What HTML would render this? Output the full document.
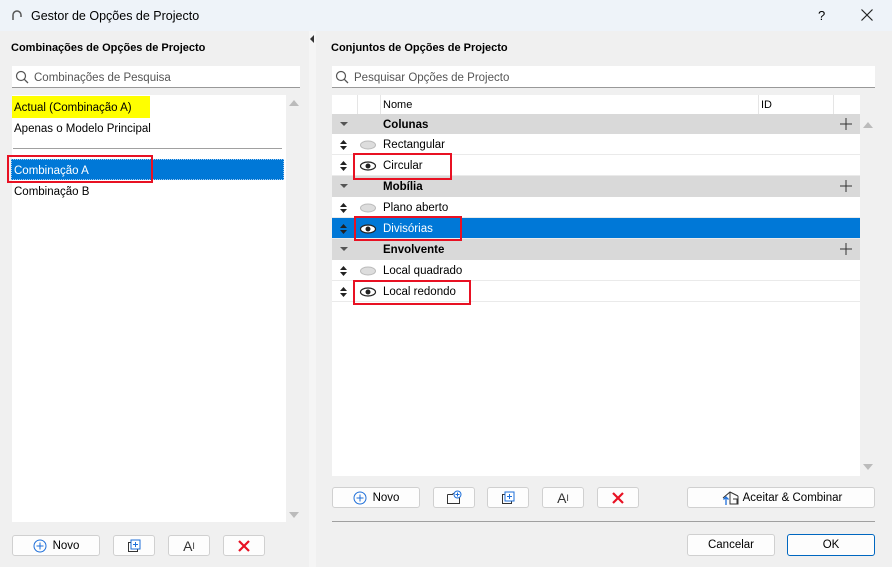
<!DOCTYPE html>
<html><head><meta charset="utf-8"><style>
*{box-sizing:border-box;margin:0;padding:0}
body{width:892px;height:567px;background:#f0f0f0;font-family:"Liberation Sans",sans-serif;font-size:11.5px;color:#000;position:relative;overflow:hidden}
.a{position:absolute}
.title{left:0;top:0;width:892px;height:31px;background:#eef3f9}
.btn{position:absolute;background:#fdfdfd;border:1px solid #d0d0d0;border-radius:3px;display:flex;align-items:center;justify-content:center;font-size:11.5px}
.row{position:absolute;left:332px;width:528px;height:21px;border-bottom:1px solid #eaeaea;background:#fff}
.grp{background:#d9d9d9;font-weight:bold;border-bottom:none}
.txt{position:absolute;left:51px;top:5px}
.arr{position:absolute;left:8px;top:6px}
.red{position:absolute;border:2px solid #e81123}
.tri{position:absolute;left:8px;top:8px;width:0;height:0;border-left:4px solid transparent;border-right:4px solid transparent;border-top:4px solid #555}
.plus{position:absolute;right:8px;top:4px}
.eye{position:absolute;left:27px;top:6px}
</style></head><body>
<div class="a title"></div>
<svg class="a" style="left:11px;top:9px" width="12" height="12"><path d="M2 11 V6 A4 4 0 0 1 10 6 V8" fill="none" stroke="#555" stroke-width="1.5"/></svg>
<div class="a" style="left:31px;top:9px;font-size:12.5px">Gestor de Opções de Projecto</div>
<div class="a" style="left:818px;top:8px;font-size:13px">?</div>
<svg class="a" style="left:861px;top:9px" width="12" height="12"><path d="M0.5 0.5L11.5 11.5M11.5 0.5L0.5 11.5" stroke="#222" stroke-width="1.2"/></svg>

<div class="a" style="left:309px;top:31px;width:7px;height:536px;background:#f5f5f5"></div>
<div class="a" style="left:310px;top:35px;width:0;height:0;border-top:4px solid transparent;border-bottom:4px solid transparent;border-right:4px solid #333"></div>

<div class="a" style="left:11px;top:42px;font-weight:bold;font-size:11px">Combinações de Opções de Projecto</div>
<div class="a" style="left:12px;top:66px;width:288px;height:22px;background:#fff;border-bottom:1px solid #999"></div>
<svg class="a" style="left:15px;top:70px" width="14" height="14"><circle cx="6" cy="6" r="4.5" fill="none" stroke="#555" stroke-width="1.2"/><path d="M9.3 9.3 L13 13" stroke="#555" stroke-width="1.3"/></svg>
<div class="a" style="left:34px;top:72px;color:#555">Combinações de Pesquisa</div>
<div class="a" style="left:12px;top:95px;width:274px;height:427px;background:#fff"></div>
<div class="a" style="left:289px;top:100px;border-left:5px solid transparent;border-right:5px solid transparent;border-bottom:6px solid #bbb"></div>
<div class="a" style="left:289px;top:512px;border-left:5px solid transparent;border-right:5px solid transparent;border-top:6px solid #bbb"></div>
<div class="a" style="left:12px;top:96px;width:138px;height:22px;background:#ffff00"></div>
<div class="a" style="left:14px;top:102px">Actual (Combinação A)</div>
<div class="a" style="left:14px;top:123px">Apenas o Modelo Principal</div>
<div class="a" style="left:13px;top:148px;width:269px;height:1px;background:#a0a0a0"></div>
<div class="a" style="left:11px;top:159px;width:273px;height:21px;background:#0078d7;border:1px dotted #9cc8f0"></div>
<div class="a" style="left:14px;top:165px;color:#fff">Combinação A</div>
<div class="red" style="left:7px;top:155px;width:146px;height:28px"></div>
<div class="a" style="left:14px;top:186px">Combinação B</div>

<div class="btn" style="left:12px;top:535px;width:88px;height:21px"><svg width="14" height="14" style="margin-right:6px"><circle cx="7" cy="7" r="6" fill="none" stroke="#1e6fd9"/><path d="M7 3.5v7M3.5 7h7" stroke="#1e6fd9"/></svg>Novo</div>
<div class="btn" style="left:113px;top:535px;width:42px;height:21px"><svg width="14" height="14"><rect x="1.5" y="3.5" width="9" height="9" fill="none" stroke="#333"/><rect x="4" y="1" width="9" height="9" fill="#fff" stroke="#1e6fd9"/><path d="M8.5 3v5M6 5.5h5" stroke="#1e6fd9"/></svg></div>
<div class="btn" style="left:168px;top:535px;width:42px;height:21px;font-size:14px;color:#333">A<sup style="font-size:9px">I</sup></div>
<div class="btn" style="left:223px;top:535px;width:42px;height:21px"><svg width="14" height="14"><path d="M2 2L12 12M12 2L2 12" stroke="#e81123" stroke-width="2.2"/></svg></div>

<div class="a" style="left:331px;top:42px;font-weight:bold;font-size:11px">Conjuntos de Opções de Projecto</div>
<div class="a" style="left:332px;top:66px;width:543px;height:22px;background:#fff;border-bottom:1px solid #999"></div>
<svg class="a" style="left:335px;top:70px" width="14" height="14"><circle cx="6" cy="6" r="4.5" fill="none" stroke="#555" stroke-width="1.2"/><path d="M9.3 9.3 L13 13" stroke="#555" stroke-width="1.3"/></svg>
<div class="a" style="left:354px;top:72px;color:#555">Pesquisar Opções de Projecto</div>
<div class="a" style="left:332px;top:95px;width:528px;height:381px;background:#fff"></div>
<div class="a" style="left:863px;top:122px;border-left:5px solid transparent;border-right:5px solid transparent;border-bottom:6px solid #bbb"></div>
<div class="a" style="left:863px;top:464px;border-left:5px solid transparent;border-right:5px solid transparent;border-top:6px solid #bbb"></div>
<div class="a" style="left:357px;top:95px;width:1px;height:19px;background:#e5e5e5"></div>
<div class="a" style="left:380px;top:95px;width:1px;height:19px;background:#e5e5e5"></div>
<div class="a" style="left:758px;top:95px;width:1px;height:19px;background:#e5e5e5"></div>
<div class="a" style="left:833px;top:95px;width:1px;height:19px;background:#e5e5e5"></div>
<div class="a" style="left:383px;top:99px;font-size:11px">Nome</div>
<div class="a" style="left:761px;top:99px;font-size:11px">ID</div>

<div class="row grp" style="top:114px;height:20px"><div class="tri"></div><div class="txt">Colunas</div><svg class="plus" width="12" height="12"><path d="M6 0v12M0 6h12" stroke="#333"/></svg></div>
<div class="row" style="top:134px"><svg class="arr" width="7" height="10"><path d="M0 4L3.5 0L7 4ZM0 6L3.5 10L7 6Z" fill="#222"/></svg><svg class="eye" width="18" height="10"><ellipse cx="9" cy="5" rx="7.5" ry="4" fill="#ddd" stroke="#bbb"/></svg><div class="txt">Rectangular</div></div>
<div class="row" style="top:155px"><svg class="arr" width="7" height="10"><path d="M0 4L3.5 0L7 4ZM0 6L3.5 10L7 6Z" fill="#222"/></svg><svg class="eye" width="18" height="10"><ellipse cx="9" cy="5" rx="7.5" ry="4" fill="#fff" stroke="#222" stroke-width="1.2"/><circle cx="9" cy="5" r="2.5" fill="#222"/></svg><div class="txt">Circular</div></div>
<div class="row grp" style="top:176px"><div class="tri"></div><div class="txt">Mobília</div><svg class="plus" width="12" height="12"><path d="M6 0v12M0 6h12" stroke="#333"/></svg></div>
<div class="row" style="top:197px"><svg class="arr" width="7" height="10"><path d="M0 4L3.5 0L7 4ZM0 6L3.5 10L7 6Z" fill="#222"/></svg><svg class="eye" width="18" height="10"><ellipse cx="9" cy="5" rx="7.5" ry="4" fill="#ddd" stroke="#bbb"/></svg><div class="txt">Plano aberto</div></div>
<div class="row" style="top:218px;background:#0078d7;color:#fff"><svg class="arr" width="7" height="10"><path d="M0 4L3.5 0L7 4ZM0 6L3.5 10L7 6Z" fill="#222"/></svg><svg class="eye" width="18" height="10"><ellipse cx="9" cy="5" rx="7.5" ry="4" fill="#fff" stroke="#222" stroke-width="1.2"/><circle cx="9" cy="5" r="2.5" fill="#222"/></svg><div class="txt">Divisórias</div></div>
<div class="row grp" style="top:239px"><div class="tri"></div><div class="txt">Envolvente</div><svg class="plus" width="12" height="12"><path d="M6 0v12M0 6h12" stroke="#333"/></svg></div>
<div class="row" style="top:260px"><svg class="arr" width="7" height="10"><path d="M0 4L3.5 0L7 4ZM0 6L3.5 10L7 6Z" fill="#222"/></svg><svg class="eye" width="18" height="10"><ellipse cx="9" cy="5" rx="7.5" ry="4" fill="#ddd" stroke="#bbb"/></svg><div class="txt">Local quadrado</div></div>
<div class="row" style="top:281px"><svg class="arr" width="7" height="10"><path d="M0 4L3.5 0L7 4ZM0 6L3.5 10L7 6Z" fill="#222"/></svg><svg class="eye" width="18" height="10"><ellipse cx="9" cy="5" rx="7.5" ry="4" fill="#fff" stroke="#222" stroke-width="1.2"/><circle cx="9" cy="5" r="2.5" fill="#222"/></svg><div class="txt">Local redondo</div></div>
<div class="red" style="left:353px;top:153px;width:99px;height:27px"></div>
<div class="red" style="left:354px;top:216px;width:108px;height:25px"></div>
<div class="red" style="left:353px;top:280px;width:118px;height:25px"></div>

<div class="btn" style="left:332px;top:487px;width:88px;height:21px"><svg width="14" height="14" style="margin-right:6px"><circle cx="7" cy="7" r="6" fill="none" stroke="#1e6fd9"/><path d="M7 3.5v7M3.5 7h7" stroke="#1e6fd9"/></svg>Novo</div>
<div class="btn" style="left:433px;top:487px;width:42px;height:21px"><svg width="16" height="15"><path d="M1.5 4.5h5l1-1.5h0M1.5 4.5v9h12v-6" fill="none" stroke="#333"/><circle cx="11.5" cy="4.5" r="3.5" fill="#fff" stroke="#1e6fd9"/><path d="M11.5 2.5v4M9.5 4.5h4" stroke="#1e6fd9"/></svg></div>
<div class="btn" style="left:487px;top:487px;width:42px;height:21px"><svg width="14" height="14"><rect x="1.5" y="3.5" width="9" height="9" fill="none" stroke="#333"/><rect x="4" y="1" width="9" height="9" fill="#fff" stroke="#1e6fd9"/><path d="M8.5 3v5M6 5.5h5" stroke="#1e6fd9"/></svg></div>
<div class="btn" style="left:542px;top:487px;width:42px;height:21px;font-size:14px;color:#333">A<sup style="font-size:9px">I</sup></div>
<div class="btn" style="left:597px;top:487px;width:42px;height:21px"><svg width="14" height="14"><path d="M2 2L12 12M12 2L2 12" stroke="#e81123" stroke-width="2.2"/></svg></div>
<div class="btn" style="left:687px;top:487px;width:188px;height:21px"><svg width="20" height="16" style="margin-right:3px"><path d="M3 8 L10 2 L18 6 M10 2 V14 H18 V6 M13 9 h4 v5" fill="none" stroke="#333"/><path d="M6 15 V7 M3.5 9.5 L6 7 L8.5 9.5" fill="none" stroke="#1e6fd9" stroke-width="1.3"/></svg>Aceitar &amp; Combinar</div>
<div class="a" style="left:332px;top:521px;width:543px;height:1px;background:#a0a0a0"></div>
<div class="btn" style="left:687px;top:534px;width:88px;height:22px">Cancelar</div>
<div class="btn" style="left:787px;top:534px;width:88px;height:22px;border:1px solid #0067c0">OK</div>
</body></html>
